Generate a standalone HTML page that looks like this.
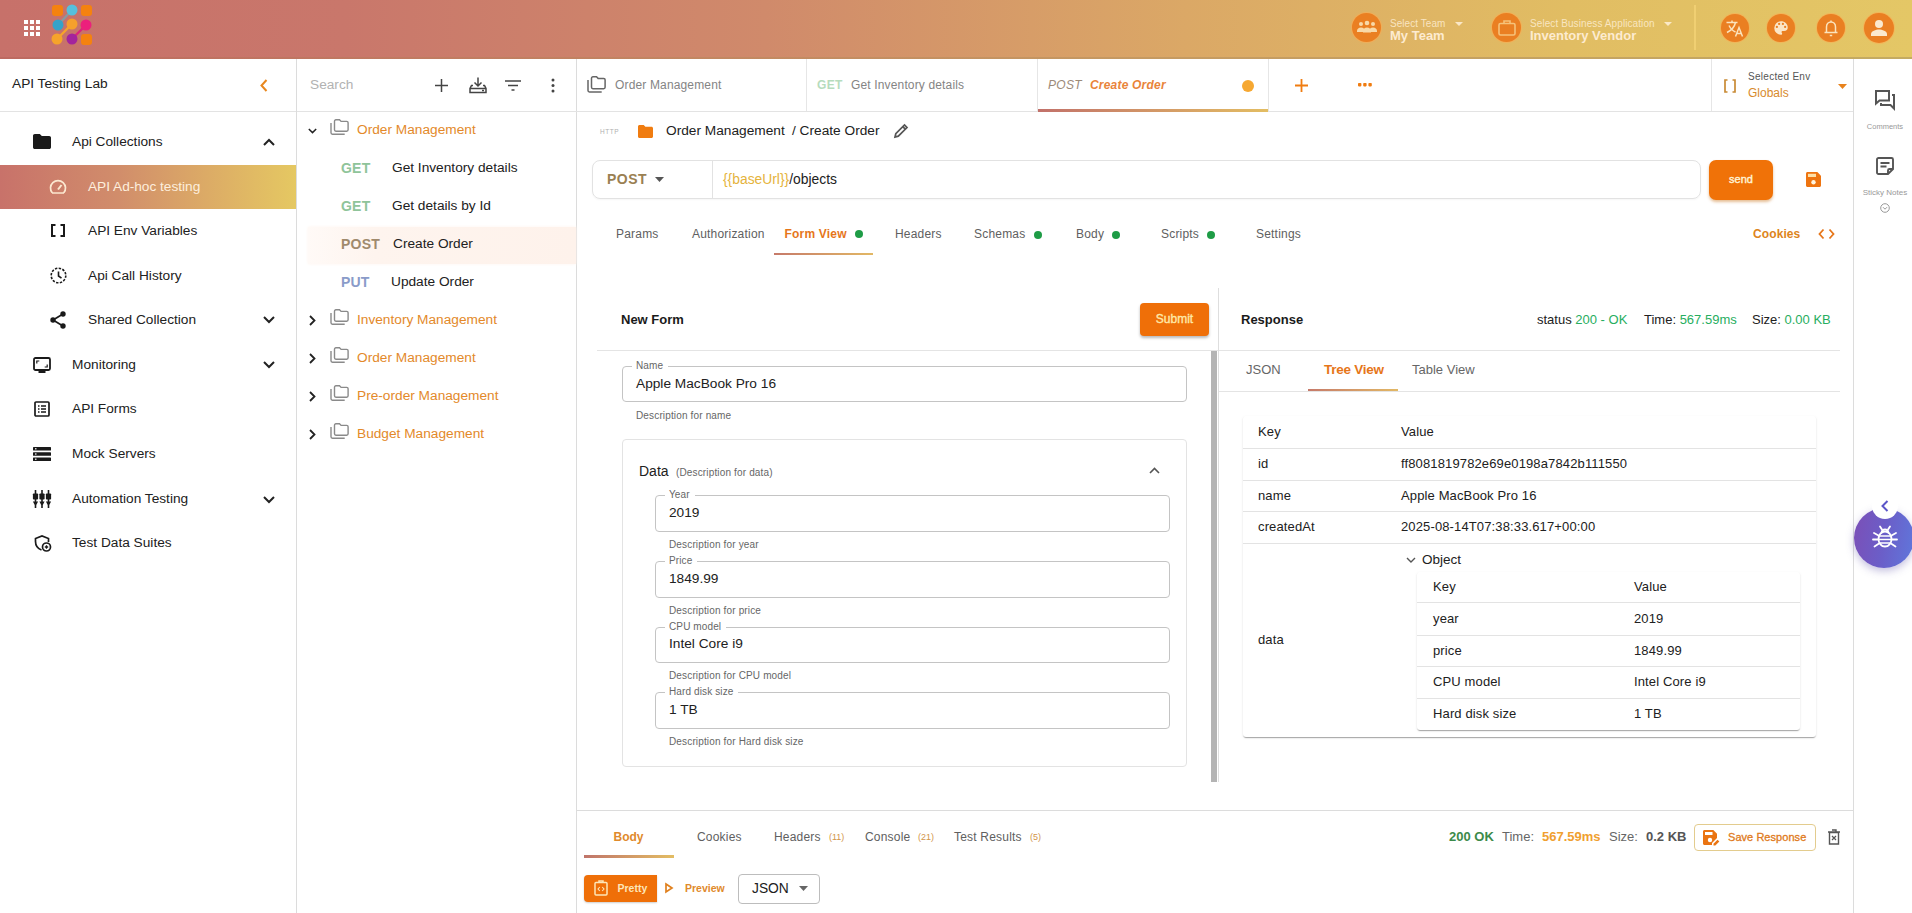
<!DOCTYPE html>
<html>
<head>
<meta charset="utf-8">
<title>API Testing Lab</title>
<style>
*{box-sizing:border-box;margin:0;padding:0}
html,body{width:1912px;height:913px;overflow:hidden;background:#fff}
body{font-family:"Liberation Sans",sans-serif;color:#212121;position:relative;font-size:13.700px}
.a{position:absolute}
.t{position:absolute;white-space:nowrap;line-height:20px;height:20px}
.b{font-weight:bold}
.or{color:#e3892a}
.gr{color:#757575}
svg{position:absolute;overflow:visible}
.hl{position:absolute;height:1px;background:#e3e3e3}
.vl{position:absolute;width:1px;background:#dcdcdc}
.dot{position:absolute;width:8px;height:8px;border-radius:50%;background:#1e9c46}
.fs{position:absolute;border:1px solid #c4c4c4;border-radius:4px}
.lg{position:absolute;background:#fff;font-size:10px;line-height:12px;color:#666;padding:0 4px;white-space:nowrap;letter-spacing:.12px}
.ds{position:absolute;font-size:10px;line-height:12px;color:#666;white-space:nowrap;letter-spacing:.15px}
.hc{position:absolute;width:29px;height:29px;border-radius:50%;background:#ea7f22;box-shadow:0 0 0 1px rgba(255,170,80,.55)}
</style>
</head>
<body>

<!-- ================= HEADER ================= -->
<div class="a" id="hdr" style="left:0;top:0;width:1912px;height:58px;background:linear-gradient(90deg,#c7716a 0%,#c9776b 18%,#d08a6b 40%,#dba866 62%,#e1bd63 82%,#e4c766 100%)"></div>
<div class="a" style="left:0;top:57px;width:1912px;height:2px;background:linear-gradient(90deg,#bd6a61,#c59a62 60%,#c4ab62)"></div>

<!-- apps grid -->
<svg style="left:24px;top:20px" width="17" height="17" viewBox="0 0 17 17" fill="#fff">
<rect x="0" y="0" width="4" height="4"/><rect x="6" y="0" width="4" height="4"/><rect x="12" y="0" width="4" height="4"/>
<rect x="0" y="6" width="4" height="4"/><rect x="6" y="6" width="4" height="4"/><rect x="12" y="6" width="4" height="4"/>
<rect x="0" y="12" width="4" height="4"/><rect x="6" y="12" width="4" height="4"/><rect x="12" y="12" width="4" height="4"/>
</svg>
<!-- logo -->
<svg style="left:50px;top:2px;filter:blur(.7px)" width="46" height="46" viewBox="0 0 46 46">
<g stroke-linecap="round" stroke-width="2.400">
<line x1="22" y1="8" x2="8" y2="23" stroke="#6fa8b8" opacity=".7"/>
<line x1="22" y1="22" x2="7" y2="37" stroke="#f6a32a"/>
<line x1="36" y1="23" x2="22" y2="37" stroke="#d9257c"/>
</g>
<rect x="2" y="3" width="11" height="11" rx="3" fill="#f5820f"/>
<circle cx="22" cy="8" r="5.5" fill="#56c0dc"/>
<rect x="31" y="3" width="11" height="11" rx="3" fill="#f5820f"/>
<circle cx="8" cy="23" r="5.5" fill="#35a2c8"/>
<circle cx="22" cy="22" r="5.5" fill="#f6a02c"/>
<circle cx="36" cy="23" r="5.5" fill="#ec1f7c"/>
<circle cx="7" cy="37" r="5.5" fill="#f6a32a"/>
<circle cx="22" cy="37" r="5.5" fill="#a3249c"/>
<rect x="31" y="32" width="11" height="11" rx="3" fill="#f5820f"/>
</svg>

<!-- header: team -->
<div class="hc" style="left:1352px;top:13px"></div>
<svg style="left:1357px;top:19px" width="20" height="16" viewBox="0 0 20 16" fill="#f8d9a8">
<circle cx="4" cy="5" r="2"/><circle cx="10" cy="4" r="2.3"/><circle cx="16" cy="5" r="2"/>
<path d="M0 12c0-2.2 1.8-3.6 4-3.6s4 1.400 4 3.600v1H0z"/><path d="M6 12.500c0-2.400 1.800-4 4-4s4 1.600 4 4v1H6z" /><path d="M12 12c0-2.200 1.800-3.600 4-3.600s4 1.400 4 3.600v1h-8z"/>
</svg>
<div class="t" style="left:1390px;top:14px;font-size:10px;color:rgba(255,240,215,.82);letter-spacing:.05px">Select Team</div>
<svg style="left:1455px;top:22px" width="8" height="4" viewBox="0 0 8 4"><path d="M0 0h8L4 4z" fill="rgba(255,240,215,.85)"/></svg>
<div class="t b" style="left:1390px;top:26px;font-size:13px;color:#fdebd0">My Team</div>

<!-- header: business app -->
<div class="hc" style="left:1492px;top:13px"></div>
<svg style="left:1498px;top:19px" width="18" height="17" viewBox="0 0 18 17" fill="none" stroke="#f6c27a" stroke-width="1.6">
<rect x="1" y="4.500" width="16" height="11.500" rx="1.500"/><path d="M6 4.500V2h6v2.500"/>
</svg>
<div class="t" style="left:1530px;top:14px;font-size:10px;color:rgba(255,240,215,.82);letter-spacing:.09px">Select Business Application</div>
<svg style="left:1664px;top:22px" width="8" height="4" viewBox="0 0 8 4"><path d="M0 0h8L4 4z" fill="rgba(255,240,215,.85)"/></svg>
<div class="t b" style="left:1530px;top:26px;font-size:13px;color:#fdebd0">Inventory Vendor</div>

<div class="a" style="left:1694px;top:5px;width:2px;height:45px;background:#f0cf72"></div>

<!-- header: round icons -->
<div class="hc" style="left:1721px;top:14px;width:28px;height:28px"></div>
<svg style="left:1726px;top:20px" width="18" height="17" viewBox="0 0 18 17" fill="none" stroke="#fbe3bd" stroke-width="1.500">
<path d="M0.500 2.500h11M6 0.500v2M9.500 2.500C8.500 7 5 10.500 1 12.500M3 5.500c1.500 3 4 5.500 6.500 6.500"/>
<path d="M9.500 16.500L13 7.500l3.500 9M10.800 13.500h4.500"/>
</svg>
<div class="hc" style="left:1767px;top:14px;width:28px;height:28px"></div>
<svg style="left:1772px;top:19px" width="18" height="18" viewBox="0 0 24 24"><path fill="#fbe6c8" d="M12 3a9 9 0 0 0 0 18c.83 0 1.500-.67 1.500-1.500 0-.39-.15-.74-.39-1.010-.23-.26-.38-.61-.38-.99 0-.83.67-1.500 1.500-1.500H16a5 5 0 0 0 5-5c0-4.420-4.030-8-9-8zm-5.500 9a1.500 1.500 0 1 1 0-3 1.500 1.500 0 0 1 0 3zm3-4a1.500 1.500 0 1 1 0-3 1.500 1.500 0 0 1 0 3zm5 0a1.500 1.500 0 1 1 0-3 1.500 1.500 0 0 1 0 3zm3 4a1.500 1.500 0 1 1 0-3 1.500 1.500 0 0 1 0 3z"/></svg>
<div class="hc" style="left:1817px;top:14px;width:28px;height:28px"></div>
<svg style="left:1823px;top:19px" width="16" height="18" viewBox="0 0 16 18" fill="none" stroke="#fbe3bd" stroke-width="1.500">
<path d="M3.500 13V8c0-3 2-5 4.500-5s4.500 2 4.500 5v5M1.500 13.500h13M8 3V1.500M6.800 16.500h2.400"/>
</svg>
<div class="hc" style="left:1864px;top:13px;width:30px;height:30px"></div>
<svg style="left:1870px;top:19px" width="18" height="18" viewBox="0 0 18 18" fill="#fbe9cf"><circle cx="9" cy="5" r="4"/><path d="M1 17v-2c0-3 5-4.500 8-4.500s8 1.500 8 4.500v2z"/></svg>

<!-- ================= LEFT SIDEBAR ================= -->
<div class="vl" style="left:296px;top:59px;height:854px"></div>
<div class="hl" style="left:0;top:111px;width:296px"></div>
<div class="t" id="lab" style="left:12px;top:74px;font-size:13.700px">API Testing Lab</div>
<svg style="left:260px;top:79px" width="8" height="13" viewBox="0 0 8 13" fill="none" stroke="#e8871e" stroke-width="2"><path d="M6.500 1L1.500 6.500l5 5.500"/></svg>

<div class="a" style="left:0;top:165px;width:296px;height:44px;background:linear-gradient(90deg,#c8726a 0%,#d18d6b 40%,#dcab66 70%,#e5c862 100%)"></div>

<!-- sidebar icons -->
<svg style="left:33px;top:134px" width="18" height="15" viewBox="0 0 18 15"><path fill="#1a1a1a" d="M1.800 0h5l2 2h7.400c1 0 1.800.8 1.800 1.800v9.400c0 1-.8 1.800-1.800 1.800H1.800C.8 15 0 14.200 0 13.200V1.800C0 .8.8 0 1.800 0z"/></svg>
<div class="t" style="left:72px;top:131.7px">Api Collections</div>
<svg style="left:263px;top:138px" width="12" height="8" viewBox="0 0 12 8" fill="none" stroke="#222" stroke-width="2"><path d="M1 7l5-5 5 5"/></svg>

<svg style="left:49px;top:179px" width="18" height="15" viewBox="0 0 18 15" fill="none" stroke="#fbe8d0" stroke-width="1.700"><path d="M3.200 13.800A7.500 7.500 0 1 1 14.800 13.800M3 14h12"/><path d="M9 10.500l3.500-4.500" stroke-width="2"/></svg>
<div class="t" style="left:88px;top:176.700px;color:#fdeedd;letter-spacing:-.02px">API Ad-hoc testing</div>

<svg style="left:51px;top:224px" width="14" height="13" viewBox="0 0 14 13" fill="none" stroke="#1a1a1a" stroke-width="2"><path d="M4.500 1H1v11h3.500M9.500 1H13v11H9.500"/></svg>
<div class="t" style="left:88px;top:220.7px">API Env Variables</div>

<svg style="left:50px;top:267px" width="17" height="17" viewBox="0 0 17 17" fill="none" stroke="#1a1a1a"><circle cx="8.500" cy="8.500" r="7.300" stroke-width="1.600" stroke-dasharray="2.400 1.420"/><path d="M8.500 4.500v4.500l3 2.200" stroke-width="1.600"/></svg>
<div class="t" style="left:88px;top:265.7px">Api Call History</div>

<svg style="left:50px;top:311px" width="16" height="18" viewBox="0 0 16 18"><g fill="#1a1a1a"><circle cx="13" cy="3" r="2.700"/><circle cx="3" cy="9" r="2.700"/><circle cx="13" cy="15" r="2.700"/></g><path d="M13 3L3 9l10 6" fill="none" stroke="#1a1a1a" stroke-width="1.700"/></svg>
<div class="t" style="left:88px;top:309.7px">Shared Collection</div>
<svg style="left:263px;top:316px" width="12" height="8" viewBox="0 0 12 8" fill="none" stroke="#222" stroke-width="2"><path d="M1 1l5 5 5-5"/></svg>

<svg style="left:33px;top:357px" width="18" height="16" viewBox="0 0 18 16" fill="none" stroke="#1a1a1a" stroke-width="1.800"><rect x="1" y="1" width="16" height="12" rx="1.500"/><path d="M5.500 15h7" stroke-width="2"/><path d="M3.800 6.500V4h2.500M14.200 7.500V10h-2.500" stroke-width="1.200"/></svg>
<div class="t" style="left:72px;top:354.7px">Monitoring</div>
<svg style="left:263px;top:361px" width="12" height="8" viewBox="0 0 12 8" fill="none" stroke="#222" stroke-width="2"><path d="M1 1l5 5 5-5"/></svg>

<svg style="left:34px;top:401px" width="16" height="16" viewBox="0 0 16 16" fill="none" stroke="#1a1a1a" stroke-width="1.700"><rect x="1" y="1" width="14" height="14" rx="1"/><path d="M4 5h1.500M7 5h5M4 8h1.500M7 8h5M4 11h1.500M7 11h5" stroke-width="1.500"/></svg>
<div class="t" style="left:72px;top:398.7px">API Forms</div>

<svg style="left:33px;top:447px" width="18" height="14" viewBox="0 0 18 14" fill="#1a1a1a"><rect x="0" y="0" width="18" height="3.600" rx=".6"/><rect x="0" y="5.200" width="18" height="3.600" rx=".6"/><rect x="0" y="10.400" width="18" height="3.600" rx=".6"/><g fill="#fff"><rect x="2" y="1.200" width="1.500" height="1.200"/><rect x="2" y="6.400" width="1.500" height="1.200"/><rect x="2" y="11.600" width="1.500" height="1.200"/></g></svg>
<div class="t" style="left:72px;top:443.7px">Mock Servers</div>

<svg style="left:32px;top:490px" width="20" height="18" viewBox="0 0 20 18" fill="#1a1a1a"><rect x="2.7" y="0" width="1.600" height="12"/><rect x="0.8999999999999999" y="3.500" width="5.200" height="6" rx=".8"/><path d="M0.8999999999999999 11.500h5.200l-1.800 3.600V18h-1.600v-2.900z"/><rect x="9.2" y="0" width="1.600" height="12"/><rect x="7.4" y="3.500" width="5.200" height="6" rx=".8"/><path d="M7.4 11.500h5.200l-1.800 3.600V18h-1.600v-2.900z"/><rect x="15.7" y="0" width="1.600" height="12"/><rect x="13.9" y="3.500" width="5.200" height="6" rx=".8"/><path d="M13.9 11.500h5.200l-1.800 3.600V18h-1.600v-2.900z"/></svg>
<div class="t" style="left:72px;top:488.7px">Automation Testing</div>
<svg style="left:263px;top:496px" width="12" height="8" viewBox="0 0 12 8" fill="none" stroke="#222" stroke-width="2"><path d="M1 1l5 5 5-5"/></svg>

<svg style="left:34px;top:535px" width="18" height="17" viewBox="0 0 18 17" fill="none" stroke="#1a1a1a" stroke-width="1.700"><path d="M7.500 15C3.500 13.500 1.500 10.500 1.500 6.500V3.500L8 1l6.500 2.500V7"/><circle cx="12.500" cy="12" r="4"/><path d="M10.800 12h3.400M12.500 10.300v3.400" stroke-width="1.300"/></svg>
<div class="t" style="left:72px;top:532.7px">Test Data Suites</div>

<!-- ================= COLLECTIONS PANEL ================= -->
<div class="vl" style="left:576px;top:59px;height:854px"></div>
<div class="hl" style="left:297px;top:111px;width:1556px"></div>
<div class="t" style="left:310px;top:74.700px;color:#b2b2b2">Search</div>
<svg style="left:435px;top:79px" width="13" height="13" viewBox="0 0 13 13" fill="none" stroke="#444" stroke-width="1.500"><path d="M6.500 0v13M0 6.500h13"/></svg>
<svg style="left:469px;top:77px" width="18" height="17" viewBox="0 0 18 17" fill="none" stroke="#444" stroke-width="1.500"><path d="M9 0.500v8M5.500 5.500L9 9l3.500-3.500"/><path d="M4 8.500H2.500L1 11.500v4h16v-4l-1.500-3H14M1 11.500h16"/><path d="M13 13.500h2" stroke-width="1.300"/></svg>
<svg style="left:505px;top:80px" width="16" height="11" viewBox="0 0 16 11" fill="none" stroke="#444" stroke-width="1.600"><path d="M0 1h16M3 5.500h10M6.500 10h3"/></svg>
<svg style="left:551px;top:78px" width="4" height="15" viewBox="0 0 4 15" fill="#444"><circle cx="2" cy="2" r="1.500"/><circle cx="2" cy="7.500" r="1.500"/><circle cx="2" cy="13" r="1.500"/></svg>

<div class="a" style="left:308px;top:227px;width:268px;height:37px;background:linear-gradient(90deg,#fffaf7,#fef4ee 25%,#fef2eb);box-shadow:0 0 3px #fef4ee"></div>

<svg style="left:308px;top:128px" width="9" height="6" viewBox="0 0 11 7" fill="none" stroke="#222" stroke-width="1.800"><path d="M1 1l4.500 4.500L10 1"/></svg>
<svg style="left:330px;top:119px" width="19" height="16" viewBox="0 0 19 16" fill="none" stroke="#8a8a8a" stroke-width="1.400"><path d="M4.500 2.200c0-.8.600-1.400 1.400-1.400h3.600l1.600 1.600h5.600c.8 0 1.400.6 1.400 1.400v7c0 .8-.6 1.400-1.400 1.400H5.900c-.8 0-1.400-.6-1.400-1.400z"/><path d="M1 4v9.800c0 .8.600 1.400 1.400 1.400h12.300"/></svg>
<div class="t or" style="left:357px;top:120px">Order Management</div>
<div class="t b" style="left:341px;top:158px;font-size:14px;color:#8fc49a;letter-spacing:.2px">GET</div>
<div class="t" style="left:392px;top:158px">Get Inventory details</div>
<div class="t b" style="left:341px;top:196px;font-size:14px;color:#8fc49a;letter-spacing:.2px">GET</div>
<div class="t" style="left:392px;top:196px">Get details by Id</div>
<div class="t b" style="left:341px;top:234px;font-size:14px;color:#a08a6c;letter-spacing:.2px">POST</div>
<div class="t" style="left:393px;top:234px">Create Order</div>
<div class="t b" style="left:341px;top:272px;font-size:14px;color:#8a9bc9;letter-spacing:.2px">PUT</div>
<div class="t" style="left:391px;top:272px">Update Order</div>
<svg style="left:309px;top:315px" width="7" height="11" viewBox="0 0 7 11" fill="none" stroke="#222" stroke-width="1.800"><path d="M1 1l4.500 4.500L1 10"/></svg><svg style="left:330px;top:309px" width="19" height="16" viewBox="0 0 19 16" fill="none" stroke="#8a8a8a" stroke-width="1.400"><path d="M4.500 2.200c0-.8.600-1.400 1.400-1.400h3.600l1.600 1.600h5.600c.8 0 1.400.6 1.400 1.400v7c0 .8-.6 1.400-1.400 1.400H5.900c-.8 0-1.400-.6-1.400-1.400z"/><path d="M1 4v9.800c0 .8.600 1.400 1.400 1.400h12.300"/></svg>
<div class="t or" style="left:357px;top:310px">Inventory Management</div>
<svg style="left:309px;top:353px" width="7" height="11" viewBox="0 0 7 11" fill="none" stroke="#222" stroke-width="1.800"><path d="M1 1l4.500 4.500L1 10"/></svg><svg style="left:330px;top:347px" width="19" height="16" viewBox="0 0 19 16" fill="none" stroke="#8a8a8a" stroke-width="1.400"><path d="M4.500 2.200c0-.8.600-1.400 1.400-1.400h3.600l1.600 1.600h5.600c.8 0 1.400.6 1.400 1.400v7c0 .8-.6 1.400-1.400 1.400H5.900c-.8 0-1.400-.6-1.400-1.400z"/><path d="M1 4v9.800c0 .8.600 1.400 1.400 1.400h12.300"/></svg>
<div class="t or" style="left:357px;top:348px">Order Management</div>
<svg style="left:309px;top:391px" width="7" height="11" viewBox="0 0 7 11" fill="none" stroke="#222" stroke-width="1.800"><path d="M1 1l4.500 4.500L1 10"/></svg><svg style="left:330px;top:385px" width="19" height="16" viewBox="0 0 19 16" fill="none" stroke="#8a8a8a" stroke-width="1.400"><path d="M4.500 2.200c0-.8.600-1.400 1.400-1.400h3.600l1.600 1.600h5.600c.8 0 1.400.6 1.400 1.400v7c0 .8-.6 1.400-1.400 1.400H5.900c-.8 0-1.400-.6-1.400-1.400z"/><path d="M1 4v9.800c0 .8.600 1.400 1.400 1.400h12.300"/></svg>
<div class="t or" style="left:357px;top:386px">Pre-order Management</div>
<svg style="left:309px;top:429px" width="7" height="11" viewBox="0 0 7 11" fill="none" stroke="#222" stroke-width="1.800"><path d="M1 1l4.500 4.500L1 10"/></svg><svg style="left:330px;top:423px" width="19" height="16" viewBox="0 0 19 16" fill="none" stroke="#8a8a8a" stroke-width="1.400"><path d="M4.500 2.200c0-.8.600-1.400 1.400-1.400h3.600l1.600 1.600h5.600c.8 0 1.400.6 1.400 1.400v7c0 .8-.6 1.400-1.400 1.400H5.900c-.8 0-1.400-.6-1.400-1.400z"/><path d="M1 4v9.800c0 .8.600 1.400 1.400 1.400h12.300"/></svg>
<div class="t or" style="left:357px;top:424px">Budget Management</div>

<!-- ================= TAB BAR ================= -->
<div class="vl" style="left:806px;top:59px;height:52px;background:#e6e6e6"></div>
<div class="vl" style="left:1037px;top:59px;height:52px;background:#e6e6e6"></div>
<div class="vl" style="left:1268px;top:59px;height:52px;background:#e6e6e6"></div>
<div class="vl" style="left:1711px;top:59px;height:52px;background:#e6e6e6"></div>
<div class="vl" style="left:1853px;top:59px;height:854px;background:#dcdcdc"></div>
<svg style="left:587px;top:76px" width="19" height="17" viewBox="0 0 19 17" fill="none" stroke="#666" stroke-width="1.500"><path d="M4.500 2.200c0-.8.600-1.400 1.400-1.400h3.600l1.600 1.600h5.600c.8 0 1.400.6 1.400 1.400v7.500c0 .8-.6 1.400-1.400 1.400H5.900c-.8 0-1.400-.6-1.400-1.400z"/><path d="M1 4v10.500c0 .8.600 1.400 1.400 1.400h12.300"/></svg>
<div class="t" style="left:615px;top:75px;font-size:12px;color:#848484;letter-spacing:.15px">Order Management</div>
<div class="t b" style="left:817px;top:75px;font-size:12px;color:#b6dcbd;letter-spacing:.3px">GET</div>
<div class="t" style="left:851px;top:75px;font-size:12px;color:#848484;letter-spacing:.15px">Get Inventory details</div>
<div class="t" style="left:1048px;top:75px;font-size:12px;color:#9c8a78;font-style:italic;letter-spacing:.3px">POST</div>
<div class="t b" style="left:1090px;top:75px;font-size:12px;color:#e9843a;font-style:italic;letter-spacing:.2px">Create Order</div>
<div class="a" style="left:1242px;top:80px;width:12px;height:12px;border-radius:50%;background:#f6a832"></div>
<div class="a" style="left:1038px;top:109px;width:230px;height:3px;background:linear-gradient(90deg,#c2716a,#e3bd63)"></div>
<svg style="left:1295px;top:79px" width="13" height="13" viewBox="0 0 13 13" fill="none" stroke="#f07c10" stroke-width="1.800"><path d="M6.500 0v13M0 6.500h13"/></svg>
<svg style="left:1358px;top:83px" width="14" height="4" viewBox="0 0 14 4" fill="#f07c10"><rect x="0" y="0" width="3.400" height="3.400" rx=".8"/><rect x="5.200" y="0" width="3.400" height="3.400" rx=".8"/><rect x="10.400" y="0" width="3.400" height="3.400" rx=".8"/></svg>
<svg style="left:1724px;top:79px" width="12" height="14" viewBox="0 0 12 14" fill="none" stroke="#c98b35" stroke-width="1.700"><path d="M3.500 1H1v12h2.500M8.500 1H11v12H8.500"/></svg>
<div class="t" style="left:1748px;top:67px;font-size:10px;color:#555;letter-spacing:.3px">Selected Env</div>
<div class="t" style="left:1748px;top:83px;font-size:12px;color:#d88a2c">Globals</div>
<svg style="left:1838px;top:84px" width="9" height="5" viewBox="0 0 9 5"><path d="M0 0h9L4.500 5z" fill="#e8821c"/></svg>

<!-- breadcrumb -->
<div class="t" style="left:600px;top:122px;font-size:6.500px;color:#b0b0b0;letter-spacing:.5px">HTTP</div>
<svg style="left:638px;top:125px" width="15" height="13" viewBox="0 0 15 13"><path fill="#f07c10" d="M1.500 0h4.200l1.700 1.700h6.100c.8 0 1.500.7 1.500 1.500v8.300c0 .8-.7 1.500-1.500 1.500h-12C.7 13 0 12.300 0 11.500v-10C0 .7.700 0 1.500 0z"/></svg>
<div class="t" style="left:666px;top:121px;font-size:13.700px">Order Management</div>
<div class="t" style="left:792px;top:121px;font-size:13.700px">/ Create Order</div>
<svg style="left:894px;top:124px" width="14" height="14" viewBox="0 0 14 14" fill="none" stroke="#555" stroke-width="1.700"><path d="M1 13l.8-3.300L10.500 1l2.500 2.500-8.700 8.700zM8.800 2.700l2.500 2.500"/></svg>

<!-- url bar -->
<div class="a" style="left:592px;top:160px;width:1109px;height:39px;border:1px solid #e2e2e2;border-radius:8px;box-shadow:0 1px 2px rgba(0,0,0,.04)"></div>
<div class="vl" style="left:712px;top:161px;height:37px;background:#e2e2e2"></div>
<div class="t b" style="left:607px;top:169px;font-size:14px;color:#9a8052;letter-spacing:.5px">POST</div>
<svg style="left:655px;top:177px" width="9" height="5" viewBox="0 0 9 5"><path d="M0 0h9L4.500 5z" fill="#555"/></svg>
<div class="t" style="left:723px;top:169px;font-size:13.850px"><span style="color:#e5b33c">{{baseUrl}}</span>/objects</div>
<div class="a" style="left:1709px;top:160px;width:64px;height:40px;border-radius:7px;background:#f07208;box-shadow:0 2px 3px rgba(200,110,20,.45)"></div>
<div class="t" style="left:1709px;top:169px;width:64px;text-align:center;font-size:11px;color:#fff3d6;-webkit-text-stroke:.4px #fff3d6">send</div>
<svg style="left:1806px;top:172px" width="15" height="15" viewBox="0 0 15 15"><path fill="#ee7410" d="M1.500 0h9.800L15 3.700v9.800c0 .8-.7 1.500-1.500 1.500h-12C.7 15 0 14.300 0 13.500v-12C0 .7.700 0 1.500 0z"/><rect x="2" y="1.800" width="8" height="3.200" fill="#fde0a8"/><circle cx="7.500" cy="10.300" r="2.200" fill="#fff5e0"/></svg>

<!-- request sub tabs -->
<div class="t" style="left:616px;top:224px;font-size:12px;color:#606060;letter-spacing:.2px">Params</div>
<div class="t" style="left:692px;top:224px;font-size:12px;color:#606060;letter-spacing:.2px">Authorization</div>
<div class="t b" style="left:784.500px;top:224px;font-size:12px;color:#e6761a;letter-spacing:.2px">Form View</div>
<div class="dot" style="left:855px;top:230px"></div>
<div class="a" style="left:774px;top:253px;width:99px;height:2px;background:linear-gradient(90deg,#c67a6a,#e2b865)"></div>
<div class="t" style="left:895px;top:224px;font-size:12px;color:#606060;letter-spacing:.2px">Headers</div>
<div class="t" style="left:974px;top:224px;font-size:12px;color:#606060;letter-spacing:.2px">Schemas</div>
<div class="dot" style="left:1034px;top:231px"></div>
<div class="t" style="left:1076px;top:224px;font-size:12px;color:#606060;letter-spacing:.2px">Body</div>
<div class="dot" style="left:1112px;top:231px"></div>
<div class="t" style="left:1161px;top:224px;font-size:12px;color:#606060;letter-spacing:.2px">Scripts</div>
<div class="dot" style="left:1207px;top:231px"></div>
<div class="t" style="left:1256px;top:224px;font-size:12px;color:#606060;letter-spacing:.2px">Settings</div>
<div class="t b" style="left:1753px;top:224px;font-size:12px;color:#dd8420;letter-spacing:.1px">Cookies</div>
<svg style="left:1818px;top:229px" width="17" height="10" viewBox="0 0 17 10" fill="none" stroke="#e6761a" stroke-width="1.800"><path d="M5.500 0.500L1.500 5l4 4.500M11.500 0.500L15.500 5l-4 4.500"/></svg>

<!-- right rail -->
<svg style="left:1875px;top:90px" width="20" height="19" viewBox="0 0 20 19" fill="none" stroke="#555" stroke-width="2"><path d="M1 1h13v9.500H4.500L1 13.500z"/><path d="M17 5h2v13.500L15.500 15H6v-2"/></svg>
<div class="t" style="left:1856px;top:116.500px;width:58px;text-align:center;font-size:7.500px;color:#999">Comments</div>
<svg style="left:1876px;top:157px" width="18" height="18" viewBox="0 0 18 18" fill="none" stroke="#555" stroke-width="1.900"><path d="M2.500 1h13c.8 0 1.500.7 1.500 1.500V12l-5 5H2.500C1.700 17 1 16.300 1 15.500v-13C1 1.700 1.700 1 2.500 1z"/><path d="M4.500 6h9M4.500 9.500h6" stroke-width="1.900"/><path d="M17 12h-3.500c-.8 0-1.500.7-1.500 1.500V17"/></svg>
<div class="t" style="left:1854px;top:182.500px;width:62px;text-align:center;font-size:8px;color:#999">Sticky Notes</div>
<svg style="left:1880px;top:203px" width="10" height="10" viewBox="0 0 10 10" fill="none" stroke="#999" stroke-width="1"><circle cx="5" cy="5" r="4.300"/><path d="M3 4.200l2 2 2-2"/></svg>

<!-- ================= FORM PANEL ================= -->
<div class="t b" style="left:621px;top:310px;font-size:13px;color:#1a1a1a">New Form</div>
<div class="a" style="left:1140px;top:303px;width:69px;height:33px;border-radius:4px;background:#ef6f08;box-shadow:0 2px 3px rgba(0,0,0,.28)"></div>
<div class="t" style="left:1140px;top:309px;width:69px;text-align:center;font-size:12px;color:#ffe9a8;-webkit-text-stroke:.35px #ffe9a8">Submit</div>
<div class="hl" style="left:597px;top:350px;width:622px;background:#e4e4e4"></div>
<div class="vl" style="left:1218px;top:288px;height:494px;background:#dedede"></div>
<div class="a" style="left:1211px;top:351px;width:6px;height:431px;background:#b4b4b4"></div>

<div class="fs" style="left:622px;top:366px;width:565px;height:36px"></div>
<div class="lg" style="left:632px;top:359.5px;width:36px">Name</div>
<div class="t" style="left:636px;top:374px;font-size:13.700px">Apple MacBook Pro 16</div>
<div class="ds" style="left:636px;top:409.500px">Description for name</div>

<div class="a" style="left:622px;top:439px;width:565px;height:328px;border:1px solid #e3e3e3;border-radius:4px"></div>
<div class="t" style="left:639px;top:461px;font-size:14px">Data</div>
<div class="ds" style="left:676px;top:467px">(Description for data)</div>
<svg style="left:1149px;top:467px" width="11" height="7" viewBox="0 0 11 7" fill="none" stroke="#555" stroke-width="1.600"><path d="M1 6l4.500-4.500L10 6"/></svg>
<div class="fs" style="left:655px;top:495px;width:515px;height:37px"></div>
<div class="lg" style="left:665px;top:488.5px;width:30px">Year</div>
<div class="t" style="left:669px;top:503px;font-size:13.700px">2019</div>
<div class="ds" style="left:669px;top:539px">Description for year</div>
<div class="fs" style="left:655px;top:561px;width:515px;height:37px"></div>
<div class="lg" style="left:665px;top:554.5px;width:32px">Price</div>
<div class="t" style="left:669px;top:569px;font-size:13.700px">1849.99</div>
<div class="ds" style="left:669px;top:605px">Description for price</div>
<div class="fs" style="left:655px;top:627px;width:515px;height:36px"></div>
<div class="lg" style="left:665px;top:620.5px;width:61px">CPU model</div>
<div class="t" style="left:669px;top:634px;font-size:13.700px">Intel Core i9</div>
<div class="ds" style="left:669px;top:670px">Description for CPU model</div>
<div class="fs" style="left:655px;top:692px;width:515px;height:37px"></div>
<div class="lg" style="left:665px;top:685.5px;width:73px">Hard disk size</div>
<div class="t" style="left:669px;top:700px;font-size:13.700px">1 TB</div>
<div class="ds" style="left:669px;top:736px">Description for Hard disk size</div>


<!-- ================= RESPONSE PANEL ================= -->
<div class="t b" style="left:1241px;top:310px;font-size:13px;color:#1a1a1a">Response</div>
<div class="t" style="left:1537px;top:310px;font-size:13px">status <span style="color:#27ae60">200 - OK</span></div>
<div class="t" style="left:1644px;top:310px;font-size:13px">Time: <span style="color:#27ae60">567.59ms</span></div>
<div class="t" style="left:1752px;top:310px;font-size:13px">Size: <span style="color:#27ae60">0.00 KB</span></div>
<div class="hl" style="left:1219px;top:350px;width:621px;background:#e4e4e4"></div>
<div class="t" style="left:1246px;top:360px;font-size:13px;color:#666">JSON</div>
<div class="t b" style="left:1324px;top:360px;font-size:13.500px;color:#e6761a;letter-spacing:-.25px">Tree View</div>
<div class="t" style="left:1412px;top:360px;font-size:13px;color:#666">Table View</div>
<div class="hl" style="left:1219px;top:391px;width:621px;background:#e4e4e4"></div>
<div class="a" style="left:1308px;top:389px;width:90px;height:2px;background:linear-gradient(90deg,#c67a6a,#e2b865)"></div>

<!-- outer table -->
<div class="a" style="left:1243px;top:416px;width:573px;height:321px;background:#fff;border-radius:3px;box-shadow:0 2px 1px -1px rgba(0,0,0,.2),0 1px 1px 0 rgba(0,0,0,.14),0 1px 3px 0 rgba(0,0,0,.08)"></div>
<div class="hl" style="left:1243px;top:448px;width:573px"></div>
<div class="hl" style="left:1243px;top:480px;width:573px"></div>
<div class="hl" style="left:1243px;top:511px;width:573px"></div>
<div class="hl" style="left:1243px;top:543px;width:573px"></div>
<div class="t" style="left:1258px;top:422px;font-size:13px;letter-spacing:.13px">Key</div>
<div class="t" style="left:1401px;top:422px;font-size:13px;letter-spacing:.13px">Value</div>
<div class="t" style="left:1258px;top:454px;font-size:13px;letter-spacing:.13px">id</div>
<div class="t" style="left:1401px;top:454px;font-size:13px;letter-spacing:.13px">ff8081819782e69e0198a7842b111550</div>
<div class="t" style="left:1258px;top:486px;font-size:13px;letter-spacing:.13px">name</div>
<div class="t" style="left:1401px;top:486px;font-size:13px;letter-spacing:.13px">Apple MacBook Pro 16</div>
<div class="t" style="left:1258px;top:517px;font-size:13px;letter-spacing:.13px">createdAt</div>
<div class="t" style="left:1401px;top:517px;font-size:13px;letter-spacing:.13px">2025-08-14T07:38:33.617+00:00</div>
<div class="t" style="left:1258px;top:630px;font-size:13px;letter-spacing:.13px">data</div>
<svg style="left:1406px;top:557px" width="10" height="6" viewBox="0 0 10 6" fill="none" stroke="#555" stroke-width="1.400"><path d="M1 1l4 4 4-4"/></svg>
<div class="t" style="left:1422px;top:550px;font-size:13.500px">Object</div>
<!-- nested table -->
<div class="a" style="left:1417px;top:572px;width:383px;height:158px;background:#fff;border-radius:3px;box-shadow:0 2px 1px -1px rgba(0,0,0,.2),0 1px 1px 0 rgba(0,0,0,.14),0 1px 3px 0 rgba(0,0,0,.08)"></div>
<div class="hl" style="left:1417px;top:602px;width:383px"></div>
<div class="hl" style="left:1417px;top:635px;width:383px"></div>
<div class="hl" style="left:1417px;top:666px;width:383px"></div>
<div class="hl" style="left:1417px;top:698px;width:383px"></div>
<div class="t" style="left:1433px;top:577px;font-size:13px;letter-spacing:.13px">Key</div>
<div class="t" style="left:1634px;top:577px;font-size:13px;letter-spacing:.13px">Value</div>
<div class="t" style="left:1433px;top:609px;font-size:13px;letter-spacing:.13px">year</div>
<div class="t" style="left:1634px;top:609px;font-size:13px;letter-spacing:.13px">2019</div>
<div class="t" style="left:1433px;top:641px;font-size:13px;letter-spacing:.13px">price</div>
<div class="t" style="left:1634px;top:641px;font-size:13px;letter-spacing:.13px">1849.99</div>
<div class="t" style="left:1433px;top:672px;font-size:13px;letter-spacing:.13px">CPU model</div>
<div class="t" style="left:1634px;top:672px;font-size:13px;letter-spacing:.13px">Intel Core i9</div>
<div class="t" style="left:1433px;top:704px;font-size:13px;letter-spacing:.13px">Hard disk size</div>
<div class="t" style="left:1634px;top:704px;font-size:13px;letter-spacing:.13px">1 TB</div>

<!-- floating bug bubble -->
<div class="a" style="left:1854px;top:508px;width:60px;height:60px;border-radius:50%;background:linear-gradient(100deg,#7a50b8 5%,#6b5ec8 50%,#5f78dc 100%);box-shadow:0 3px 8px rgba(80,70,160,.35)"></div>
<div class="a" style="left:1872px;top:493px;width:26px;height:26px;border-radius:50%;background:#fff"></div>
<svg style="left:1881px;top:500px" width="8" height="12" viewBox="0 0 8 12" fill="none" stroke="#5b55c8" stroke-width="2"><path d="M6.500 1L1.500 6l5 5"/></svg>
<svg style="left:1871px;top:524px" width="28" height="26" viewBox="0 0 28 26" fill="none" stroke="#fff" stroke-width="1.800" stroke-linecap="round">
<ellipse cx="14" cy="15" rx="6.500" ry="7.500"/><path d="M9 12h10M8 15.500h12M9 19h10" stroke-width="1.500"/>
<path d="M10.500 8.500C11 6.500 12.500 5.500 14 5.500s3 1 3.500 3"/><path d="M11 5.500L9 2.500M17 5.500l2-3M7.500 11.500L3 9M20.500 11.500L25 9M7.500 15.500H2M20.500 15.500H26M8 19.500l-4.500 3M20 19.500l4.500 3"/>
</svg>

<!-- ================= BOTTOM BAR ================= -->
<div class="hl" style="left:577px;top:810px;width:1276px;background:#dcdcdc"></div>
<div class="t b" style="left:613.500px;top:827px;font-size:12px;color:#df8a2c">Body</div>
<div class="a" style="left:584px;top:855px;width:90px;height:3px;background:linear-gradient(90deg,#c0746a,#e3bd63)"></div>
<div class="t" style="left:697px;top:827px;font-size:12px;color:#606060;letter-spacing:.2px">Cookies</div>
<div class="t" style="left:774px;top:827px;font-size:12px;color:#606060;letter-spacing:.2px">Headers</div>
<div class="t" style="left:829px;top:827px;font-size:9px;color:#d2954a">(11)</div>
<div class="t" style="left:865px;top:827px;font-size:12px;color:#606060;letter-spacing:.2px">Console</div>
<div class="t" style="left:918px;top:827px;font-size:9px;color:#d2954a">(21)</div>
<div class="t" style="left:954px;top:827px;font-size:12px;color:#606060;letter-spacing:.2px">Test Results</div>
<div class="t" style="left:1030px;top:827px;font-size:9px;color:#d2954a">(5)</div>

<div class="a" style="left:584px;top:875px;width:73px;height:27px;border-radius:4px 0 0 4px;background:#ef6f08;box-shadow:0 1px 2px rgba(0,0,0,.2)"></div>
<svg style="left:594px;top:880px" width="14" height="16" viewBox="0 0 14 16" fill="none" stroke="#fde6b8" stroke-width="1.500"><rect x="1" y="2.500" width="12" height="12.500" rx="1"/><path d="M5 2.500V1h4v1.500"/><path d="M5.800 7L4 9l1.800 2M8.200 7L10 9l-1.800 2" stroke-width="1.100"/></svg>
<div class="t b" style="left:617.500px;top:877.700px;font-size:10.500px;color:#fde6b8">Pretty</div>
<svg style="left:665px;top:883px" width="8" height="10" viewBox="0 0 8 10" fill="none" stroke="#e0801e" stroke-width="1.700"><path d="M1 1l6 4L1 9z"/></svg>
<div class="t b" style="left:685px;top:877.700px;font-size:10.500px;color:#df8a2c">Preview</div>
<div class="a" style="left:738px;top:874px;width:82px;height:30px;border:1px solid #bdbdbd;border-radius:4px"></div>
<div class="t" style="left:752px;top:878.500px;font-size:13.800px">JSON</div>
<svg style="left:799px;top:886px" width="9" height="5" viewBox="0 0 9 5"><path d="M0 0h9L4.500 5z" fill="#666"/></svg>

<div class="t b" style="left:1449px;top:827.400px;font-size:13px;color:#3c8a4a">200 OK</div>
<div class="t" style="left:1502px;top:827.400px;font-size:13px;color:#666">Time:</div>
<div class="t b" style="left:1542px;top:827.400px;font-size:13px;color:#f0a030">567.59ms</div>
<div class="t" style="left:1609px;top:827.400px;font-size:13px;color:#666">Size:</div>
<div class="t b" style="left:1646px;top:827.400px;font-size:13px;color:#555">0.2 KB</div>
<div class="a" style="left:1694px;top:824px;width:122px;height:27px;border:1px solid #e3cc8e;border-radius:4px"></div>
<svg style="left:1703px;top:830px" width="16" height="16" viewBox="0 0 16 16"><path fill="#ea7412" d="M1.500 0h8.800L14 3.700V8l-5 5v2H1.500C.7 15 0 14.300 0 13.500v-12C0 .7.700 0 1.500 0z"/><rect x="2" y="2" width="7.500" height="3" fill="#fff"/><circle cx="7" cy="10" r="2.200" fill="#fff"/><path d="M10.500 15.500v-1.800l4-4 1.800 1.800-4 4z" fill="#ea7412"/></svg>
<div class="t" style="left:1728px;top:827.400px;font-size:11px;color:#e07a20;letter-spacing:.05px;-webkit-text-stroke:.3px #e07a20">Save Response</div>
<svg style="left:1828px;top:829px" width="12" height="16" viewBox="0 0 12 16" fill="none" stroke="#555" stroke-width="1.400"><path d="M1.500 3.500h9V15h-9zM0 3h12M4 1h4v2"/><path d="M4 7l4 4M8 7l-4 4" stroke-width="1.200"/></svg>

</body>
</html>
